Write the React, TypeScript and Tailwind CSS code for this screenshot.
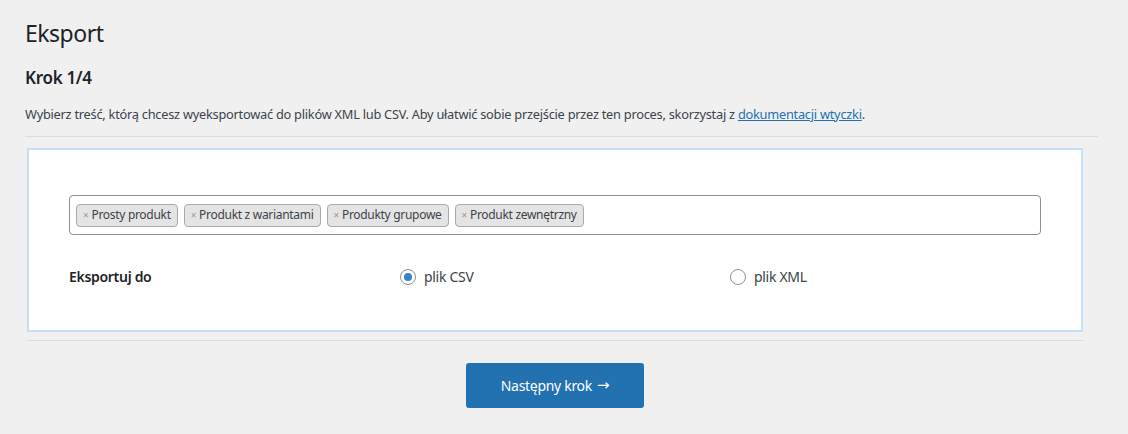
import { useState } from 'react';

const font = { fontFamily: '"Noto Sans", "Open Sans", sans-serif' };

const tags = ['Prosty produkt', 'Produkt z wariantami', 'Produkty grupowe', 'Produkt zewnętrzny'];

export default function App() {
  const [format, setFormat] = useState<'csv' | 'xml'>('csv');

  return (
    <div className="min-h-[434px] bg-[#f0f0f1] pl-[25px] pr-[30px] pt-[18px] text-[#3c434a] tracking-[-0.3px]" style={font}>
      <h1 className="text-[23px] leading-[30px] font-normal tracking-[-0.5px] text-[#1d2327]">Eksport</h1>
      <h2 className="mt-[18px] text-[17px] leading-[24px] font-semibold text-[#1d2327]">Krok 1/4</h2>
      <p className="mt-[14px] text-[12.8px] leading-[20px] tracking-[-0.25px]">
        Wybierz treść, którą chcesz wyeksportować do plików XML lub CSV. Aby ułatwić sobie przejście przez ten proces,
        skorzystaj z{' '}
        <a href="#" className="text-[#2271b1] underline">
          dokumentacji wtyczki
        </a>
        .
      </p>
      <hr className="mt-[12px] border-0 border-t border-[#dcdcde]" />

      <div className="ml-[2px] mr-[15px] mt-[11px] border-2 border-[#c5dff8] bg-white px-[40px] pt-[45px] pb-[43px]">
        <div className="flex h-[40px] items-center gap-[6px] rounded-[4px] border border-[#8c8f94] px-[6px]">
          {tags.map((t) => (
            <span
              key={t}
              className="flex h-[23px] items-center gap-[3px] rounded-[4px] border border-[#aaa] bg-[#e4e4e4] px-[6px] text-[12px] text-[#3c434a]"
            >
              <span className="text-[10px] text-[#999]">×</span>
              {t}
            </span>
          ))}
        </div>

        <div className="mt-[31px] flex items-center text-[14px]">
          <div className="w-[331px] font-semibold text-[#1d2327]">Eksportuj do</div>
          <label className="flex w-[330px] cursor-pointer items-center gap-[8px]" onClick={() => setFormat('csv')}>
            <Radio checked={format === 'csv'} />
            <span>plik CSV</span>
          </label>
          <label className="flex cursor-pointer items-center gap-[8px]" onClick={() => setFormat('xml')}>
            <Radio checked={format === 'xml'} />
            <span>plik XML</span>
          </label>
        </div>
      </div>

      <hr className="ml-[2px] mr-[15px] mt-[8px] border-0 border-t border-[#dcdcde]" />

      <div className="ml-[2px] mr-[15px] mt-[22px] flex justify-center">
        <button
          type="button"
          className="flex h-[45px] w-[178px] items-center justify-center gap-[5px] rounded-[3px] bg-[#2271b1] text-[14px] text-white"
        >
          Następny krok
          <span className="text-[15px]" style={{ fontFamily: '"DejaVu Sans", sans-serif' }}>
            →
          </span>
        </button>
      </div>
    </div>
  );
}

function Radio({ checked }: { checked: boolean }) {
  return (
    <span className="flex h-[16px] w-[16px] items-center justify-center rounded-full border border-[#8c8f94] bg-white">
      {checked && <span className="h-[8px] w-[8px] rounded-full bg-[#3582c4]" />}
    </span>
  );
}
